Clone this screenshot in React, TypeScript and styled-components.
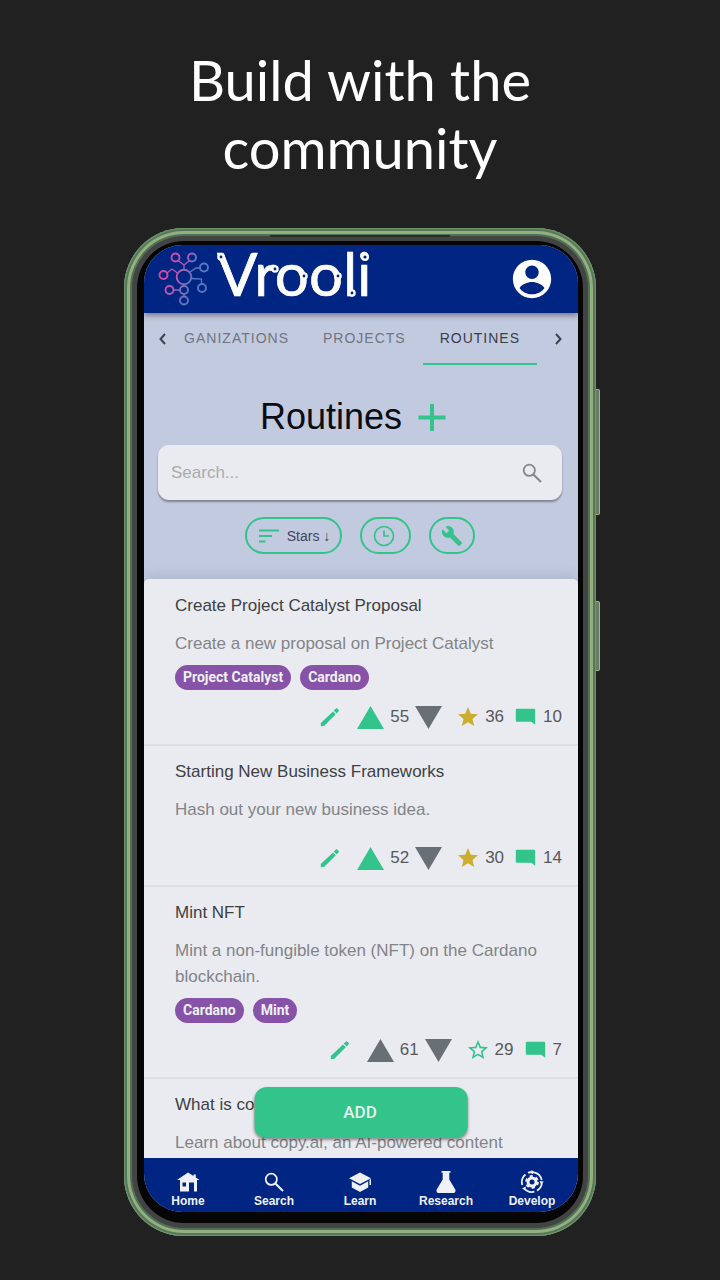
import React from "react";
import styled, { createGlobalStyle } from "styled-components";

const GlobalStyle = createGlobalStyle`
  * { box-sizing: border-box; }
  body { margin: 0; background: #212121; font-family: "Liberation Sans", Arial, sans-serif; }
  button, input { font-family: inherit; }
  h1, h2, h3, p, ul { margin: 0; padding: 0; }
`;

const GREEN = "#32c48a";
const NAVY = "#002582";
const SLATE = "#687076";

const Page = styled.main`
  display: flex;
  flex-direction: column;
  height: 100vh;
  padding: 46px 124px 44px;
`;

const Headline = styled.h1`
  flex: none;
  padding: 0 32px;
  margin-bottom: 46px;
  color: #fff;
  font: 400 56px/68px Lato, sans-serif;
  text-align: center;
`;

const Phone = styled.section`
  position: relative;
  flex: 1;
  min-height: 0;
  display: flex;
  padding: 17px 18px 24px 20px;
  border-radius: 60px;
  background: #060606;
  box-shadow:
    inset 0 0 0 1px #6f9469,
    inset 0 0 0 3px #54795a,
    inset 0 0 0 6px #96ad80,
    inset 0 0 0 8px #4d7354,
    inset 0 0 0 13px #434343;
`;

const SideKey = styled.span<{ $top: string; $height: string }>`
  position: absolute;
  left: 100%;
  top: ${(p) => p.$top};
  height: ${(p) => p.$height};
  width: 4px;
  border: 1px solid #9ab787;
  border-left: 0;
  border-radius: 0 2px 2px 0;
  background: #6a7f62;
`;

const Speaker = styled.span`
  position: absolute;
  top: 7px;
  left: 31%;
  right: 31%;
  height: 2px;
  border-radius: 2px;
  background: #2c2c2c;
`;

const Screen = styled.div`
  position: relative;
  flex: 1;
  min-width: 0;
  display: flex;
  flex-direction: column;
  overflow: hidden;
  border-radius: 38px;
  background: #c2cadf;
`;

const TopBar = styled.header`
  position: relative;
  flex: none;
  display: flex;
  align-items: center;
  justify-content: space-between;
  height: 68px;
  padding: 0 23px 0 12px;
  background: ${NAVY};
  box-shadow: 0 2px 6px rgba(0, 0, 0, 0.45);
`;

const IconButton = styled.button`
  display: flex;
  padding: 0;
  border: 0;
  background: none;
  color: inherit;
`;

const Tabs = styled.nav`
  flex: none;
  display: flex;
  align-items: stretch;
  height: 52px;
  padding: 0 11px 0 10px;
  color: #3d4250;
`;

const TabTrack = styled.div`
  flex: 1;
  min-width: 0;
  display: flex;
  justify-content: flex-end;
  overflow: hidden;
  margin: 0 12px;
`;

const Tab = styled.button<{ $active?: boolean }>`
  flex: none;
  padding: 0 17px;
  border: 0;
  border-bottom: 2px solid ${(p) => (p.$active ? GREEN : "transparent")};
  background: none;
  color: ${(p) => (p.$active ? "#3a3e48" : "#70757f")};
  font-size: 14px;
  letter-spacing: 1px;
`;

const Heading = styled.div`
  flex: none;
  display: flex;
  align-items: center;
  justify-content: center;
  gap: 12px;
  margin-top: 28px;
  padding-right: 12px;
  color: ${GREEN};

  h2 {
    color: #0b0d12;
    font-size: 36px;
    font-weight: 400;
    line-height: 48px;
  }
`;

const SearchBox = styled.label`
  flex: none;
  display: flex;
  align-items: center;
  height: 55px;
  margin: 4px 16px 0 14px;
  padding: 0 18px 0 13px;
  border-radius: 11px;
  background: #e9ebf0;
  color: #858789;
  box-shadow: 0 2px 2px rgba(0, 0, 0, 0.35);

  input {
    flex: 1;
    min-width: 0;
    padding: 0;
    border: 0;
    outline: 0;
    background: none;
    font-size: 17px;
  }
  input::placeholder { color: #a9abae; opacity: 1; }
`;

const Filters = styled.div`
  flex: none;
  display: flex;
  justify-content: center;
  gap: 18px;
  margin: 17px 0 25px;
  padding-right: 2px;
`;

const Pill = styled.button<{ $end?: number }>`
  display: flex;
  align-items: center;
  gap: 6px;
  height: 37px;
  padding: 0 ${(p) => p.$end ?? 10}px 0 10px;
  border: 2px solid ${GREEN};
  border-radius: 19px;
  background: none;
  color: ${GREEN};
  font-size: 14px;

  span { color: #40465a; }
`;

const List = styled.ul`
  flex: 1;
  min-height: 0;
  overflow: hidden;
  list-style: none;
  border-radius: 5px 5px 0 0;
  background: #e9ebf0;
  box-shadow: 0 -2px 14px rgba(80, 70, 110, 0.2);

  && { padding-top: 1px; }
`;

const Item = styled.li`
  padding: 12px 16px 15px 31px;
  border-bottom: 2px solid #dddfe4;

  h3 {
    color: #3e4143;
    font-size: 17px;
    font-weight: 400;
    line-height: 27px;
  }
  p {
    margin-top: 12px;
    color: #828487;
    font-size: 17px;
    line-height: 26px;
  }
`;

const Chips = styled.div`
  display: flex;
  gap: 9px;
  margin-top: 8px;
`;

const Chip = styled.span`
  padding: 0 8px;
  border-radius: 13px;
  background: #8653a8;
  color: #eef0f4;
  font: 700 14px/25px Roboto, sans-serif;
`;

const Stats = styled.div<{ $tight?: boolean }>`
  display: flex;
  align-items: center;
  justify-content: flex-end;
  gap: 6px;
  height: 24px;
  margin-top: ${(p) => (p.$tight ? 15 : 23)}px;
  color: #56595c;
  font-size: 17px;

  svg { flex: none; }
`;

const StatButton = styled(IconButton)<{ $lead?: boolean }>`
  margin-left: ${(p) => (p.$lead ? 9 : 0)}px;
`;

const CommentButton = styled(IconButton)`
  margin-left: 3px;
`;

const BottomBar = styled.nav`
  flex: none;
  display: flex;
  height: 54px;
  padding: 0 3px 0 1px;
  background: ${NAVY};
`;

const NavLink = styled.a`
  flex: 1;
  display: flex;
  flex-direction: column;
  align-items: center;
  padding-top: 12px;
  color: #eef0f6;
  font-size: 12px;
  font-weight: 700;
  line-height: 14px;
  text-decoration: none;
`;

const AddButton = styled.button`
  position: absolute;
  bottom: 74px;
  left: 50%;
  width: 49%;
  height: 51px;
  padding: 0 2px 2px 0;
  transform: translateX(-50%);
  border: 0;
  border-radius: 12px;
  background: ${GREEN};
  color: #e9f2ef;
  font: 500 17px Roboto, sans-serif;
  box-shadow: 0 2px 3px rgba(0, 0, 0, 0.4);
`;

const Logo = () => (
  <svg width="220" height="60" viewBox="0 0 220 60" overflow="visible" role="img" aria-label="Vrooli">
    <defs>
      <linearGradient id="net" gradientUnits="userSpaceOnUse" x1="6" y1="20" x2="46" y2="34">
        <stop offset="0" stopColor="#d6459d" />
        <stop offset="0.4" stopColor="#b55bb4" />
        <stop offset="0.7" stopColor="#6673bd" />
        <stop offset="1" stopColor="#5676c4" />
      </linearGradient>
    </defs>
    <g fill="none" stroke="url(#net)" strokeWidth="1.9">
      <circle cx="28" cy="28" r="7.3" />
      <circle cx="19.500" cy="8.500" r="4" />
      <circle cx="36" cy="8.500" r="4" />
      <circle cx="7.500" cy="26" r="4" />
      <circle cx="48" cy="18.500" r="4" />
      <circle cx="46" cy="39" r="4" />
      <circle cx="13.500" cy="41" r="4" />
      <circle cx="28" cy="41" r="4" />
      <circle cx="28" cy="51.500" r="4" />
      <path d="M28 20.500V16L22 11.500M28 16L33.500 11.500M11 24L16 20L21.500 24M34 23L40 19H44M35.500 29.500L45.500 30V35M17.500 41H24M28 35.500V37M28 45V47.500" strokeWidth="1.300" />
    </g>
    <text
      x="61"
      y="47"
      fill="#fff"
      stroke="#fff"
      strokeWidth="0.7"
      strokeLinejoin="round"
      fontFamily="Lato"
      fontWeight="400"
      fontSize="60"
    >
      Vrooli
    </text>
    <g fill={NAVY} stroke="#fff" strokeWidth="2.400">
      <circle cx="65" cy="8" r="2.600" />
      <circle cx="119" cy="20" r="2.600" />
      <circle cx="148" cy="27" r="2.600" />
      <circle cx="182" cy="27" r="2.600" />
      <circle cx="196" cy="44" r="2.600" />
      <circle cx="209" cy="8" r="2.800" />
    </g>
  </svg>
);

const Chevron = ({ flip }: { flip?: boolean }) => (
  <svg width="18" height="52" viewBox="0 0 18 52" fill="none" stroke="currentColor" strokeWidth="2">
    <path d={flip ? "M7 21L11.500 26L7 31" : "M11 21L6.500 26L11 31"} />
  </svg>
);

const Glass = () => (
  <svg width="24" height="24" viewBox="0 0 24 24" fill="none" stroke="currentColor" strokeWidth="1.800">
    <circle cx="9.300" cy="9.300" r="5.600" />
    <path d="M13.400 13.400L21 21" strokeWidth="2.100" />
  </svg>
);

type MaterialProps = { d: string; size?: number; color?: string; box?: string };

const Material = ({ d, size = 24, color = "currentColor", box = "0 0 24 24" }: MaterialProps) => (
  <svg width={size} height={size} viewBox={box} fill={color}>
    <path d={d} fillRule="evenodd" />
  </svg>
);

const ACCOUNT =
  "M12 2C6.480 2 2 6.480 2 12s4.480 10 10 10 10-4.480 10-10S17.520 2 12 2zm0 3c1.930 0 3.500 1.570 3.500 3.500S13.930 12 12 12s-3.500-1.570-3.500-3.500S10.070 5 12 5zm0 15c-2.650 0-5-1.250-6.500-3.300C6.600 14.900 9.700 13.600 12 13.600s5.400 1.300 6.500 3.100C17 18.750 14.650 20 12 20z";
const WRENCH =
  "M22.700 19l-9.100-9.100c.9-2.300.4-5-1.500-6.900-2-2-5-2.400-7.400-1.300L9 6 6 9 1.600 4.700C.4 7.100.9 10.100 2.900 12.100c1.900 1.900 4.600 2.400 6.900 1.500l9.100 9.100c.4.4 1 .4 1.400 0l2.300-2.300c.5-.4.5-1.100.1-1.400z";
const PENCIL =
  "M2.800 18v3.300l3.200-.3L17.800 9.200 15 6.400 2.800 18zM18.600 8.400l1.900-1.900c.5-.5.5-1.200 0-1.700l-1.100-1.100c-.5-.5-1.200-.5-1.700 0L15.800 5.600z";
const STAR = "M12 17.270L18.180 21l-1.640-7.030L22 9.240l-7.190-.61L12 2 9.190 8.630 2 9.240l5.460 4.730L5.820 21z";
const STAR_OUTLINE =
  "M22 9.240l-7.190-.62L12 2 9.190 8.630 2 9.240l5.460 4.730L5.820 21 12 17.270 18.180 21l-1.630-7.030L22 9.240zM12 15.400l-3.760 2.270 1-4.280-3.320-2.880 4.380-.38L12 6.100l1.710 4.040 4.380.38-3.320 2.880 1 4.280L12 15.400z";
const COMMENT = "M4 3.800h17a1.200 1.200 0 0 1 1.200 1.200v14.800L18.300 16.800H4A1.200 1.200 0 0 1 2.800 15.600V5A1.200 1.200 0 0 1 4 3.800z";
const HOME = "M12 2.500L1 10H4V21.500H13V12.500H18V21.500H21V10H23.500L19.800 7.500V4.500H17.500V6zM6.500 12.500H10V16.500H6.500z";
const FLASK = "M7.500 1H16.500V2.800H15.300V9.500L21.300 19.500C22 21 21.200 23 19.500 23H4.500C2.800 23 2 21 2.700 19.500L8.700 9.500V2.800H7.500z";
const LEARN = "M12 2.500L1 8.300L12 14L23 8.300zM3.800 11.300V17.500L12 22L20.200 17.500V11.300L12 15.700zM21.500 9.800V15H23V9z";

const Triangle = ({ down, active }: { down?: boolean; active?: boolean }) => (
  <svg width="27" height="23" viewBox="0 0 27 23" fill={active ? GREEN : SLATE}>
    <path d={down ? "M0 0H27L13.500 23z" : "M0 23H27L13.500 0z"} />
  </svg>
);

const Develop = () => (
  <svg width="24" height="24" viewBox="0 0 24 24" fill="none" stroke="currentColor">
    <path
      d="M14 2.300A10 10 0 0 1 21.700 10M21.900 13A10 10 0 0 1 17 20.600M14.500 21.700A10 10 0 0 1 4 18M2.300 15A10 10 0 0 1 5.500 4.500M8 2.900A10 10 0 0 1 12 2"
      strokeWidth="1.800"
    />
    <path d="M11.500 0L15 2.300L11.500 4.500zM23.800 11.500L21 14.500L19.500 11zM2 18.500L5.800 16.500L5.500 20.500z" fill="currentColor" stroke="none" />
    <circle cx="12" cy="12" r="4" strokeWidth="3" />
    <circle cx="12" cy="12" r="6" strokeWidth="1.800" strokeDasharray="3.200 3.083" />
  </svg>
);

type Counts = {
  votes: number;
  up?: boolean;
  stars: number;
  starred?: boolean;
  comments: number;
};

type Routine = {
  title: string;
  text: string;
  tags: string[];
  counts?: Counts;
};

const routines: Routine[] = [
  {
    title: "Create Project Catalyst Proposal",
    text: "Create a new proposal on Project Catalyst",
    tags: ["Project Catalyst", "Cardano"],
    counts: { votes: 55, up: true, stars: 36, starred: true, comments: 10 },
  },
  {
    title: "Starting New Business Frameworks",
    text: "Hash out your new business idea.",
    tags: [],
    counts: { votes: 52, up: true, stars: 30, starred: true, comments: 14 },
  },
  {
    title: "Mint NFT",
    text: "Mint a non-fungible token (NFT) on the Cardano blockchain.",
    tags: ["Cardano", "Mint"],
    counts: { votes: 61, stars: 29, comments: 7 },
  },
  { title: "What is copy.ai?", text: "Learn about copy.ai, an AI-powered content", tags: [] },
];

const CountRow = ({ counts, tight }: { counts: Counts; tight: boolean }) => (
  <Stats $tight={tight}>
    <StatButton aria-label="Edit"><Material d={PENCIL} color={GREEN} /></StatButton>
    <StatButton $lead aria-label="Upvote"><Triangle active={counts.up} /></StatButton>
    <span>{counts.votes}</span>
    <StatButton aria-label="Downvote"><Triangle down /></StatButton>
    <StatButton $lead aria-label="Star">
      <Material
        d={counts.starred ? STAR : STAR_OUTLINE}
        color={counts.starred ? "#cbae30" : GREEN}
        size={22}
        box="1 1 22 22"
      />
    </StatButton>
    <span>{counts.stars}</span>
    <CommentButton aria-label="Comments"><Material d={COMMENT} color={GREEN} /></CommentButton>
    <span>{counts.comments}</span>
  </Stats>
);

const RoutineItem = ({ r }: { r: Routine }) => (
  <Item>
    <h3>{r.title}</h3>
    <p>{r.text}</p>
    {r.tags.length > 0 && (
      <Chips>
        {r.tags.map((t) => (
          <Chip key={t}>{t}</Chip>
        ))}
      </Chips>
    )}
    {r.counts && <CountRow counts={r.counts} tight={r.tags.length > 0} />}
  </Item>
);

export default function App() {
  return (
    <Page>
      <GlobalStyle />
      <Headline>Build with the community</Headline>
      <Phone>
        <Speaker />
        <SideKey $top="16%" $height="126px" />
        <SideKey $top="37%" $height="70px" />
        <Screen>
          <TopBar>
            <Logo />
            <IconButton aria-label="Account"><Material d={ACCOUNT} size={46} color="#fff" /></IconButton>
          </TopBar>
          <Tabs>
            <IconButton aria-label="Previous tabs"><Chevron /></IconButton>
            <TabTrack>
              <Tab>ORGANIZATIONS</Tab>
              <Tab>PROJECTS</Tab>
              <Tab $active>ROUTINES</Tab>
            </TabTrack>
            <IconButton aria-label="Next tabs"><Chevron flip /></IconButton>
          </Tabs>
          <Heading>
            <h2>Routines</h2>
            <IconButton aria-label="New routine">
              <svg width="36" height="36" viewBox="0 0 36 36" stroke="currentColor" strokeWidth="4">
                <path d="M18 5V32M4.500 18.500H31.500" />
              </svg>
            </IconButton>
          </Heading>
          <SearchBox>
            <input type="text" placeholder="Search..." aria-label="Search" />
            <Glass />
          </SearchBox>
          <Filters>
            <Pill>
              <svg width="24" height="24" viewBox="0 0 24 24" stroke="currentColor" strokeWidth="2">
                <path d="M2 6.500H22M2 12H15M2 17.500H8.500" />
              </svg>
              <span>Stars ↓</span>
            </Pill>
            <Pill aria-label="Time" $end={13}>
              <svg width="24" height="24" viewBox="0 0 24 24" fill="none" stroke="currentColor" strokeWidth="1.700">
                <circle cx="12" cy="12" r="9.500" />
                <path d="M12 6.500V12H17" />
              </svg>
            </Pill>
            <Pill aria-label="Advanced"><Material d={WRENCH} size={22} box="0 0 24 24" /></Pill>
          </Filters>
          <List>
            {routines.map((r) => (
              <RoutineItem key={r.title} r={r} />
            ))}
          </List>
          <BottomBar>
            <NavLink href="#home"><Material d={HOME} />Home</NavLink>
            <NavLink href="#search"><Glass />Search</NavLink>
            <NavLink href="#learn"><Material d={LEARN} />Learn</NavLink>
            <NavLink href="#research"><Material d={FLASK} />Research</NavLink>
            <NavLink href="#develop"><Develop />Develop</NavLink>
          </BottomBar>
          <AddButton>ADD</AddButton>
        </Screen>
      </Phone>
    </Page>
  );
}
